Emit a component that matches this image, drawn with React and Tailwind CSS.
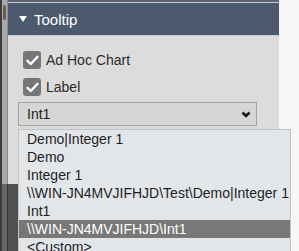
import React from 'react';

const font = { fontFamily: '"Liberation Sans", Arial, sans-serif' };

function Check({ label }) {
  return (
    <div className="flex items-center h-[18px] ml-[15px]">
      <span className="w-[18px] h-[18px] rounded-[3px] bg-[#767676] flex items-center justify-center">
        <svg width="13" height="11" viewBox="0 0 13 11">
          <path d="M1.5 5.8 L4.8 9 L11.5 1.8" fill="none" stroke="#fff" strokeWidth="2.4" strokeLinecap="round" strokeLinejoin="round" />
        </svg>
      </span>
      <span className="ml-[5px] text-[14px] text-[#2b2b2b] leading-none">{label}</span>
    </div>
  );
}

const options = [
  'Demo|Integer 1',
  'Demo',
  'Integer 1',
  '\\\\WIN-JN4MVJIFHJD\\Test\\Demo|Integer 1',
  'Int1',
  '\\\\WIN-JN4MVJIFHJD\\Int1',
  '<Custom>',
];

export default function App() {
  return (
    <div className="relative w-[299px] h-[251px] overflow-hidden bg-[#f6f6f6] flex" style={font}>
      {/* outer scrollbar */}
      <div className="w-[8px] flex flex-col">
        <div className="h-[184px] flex bg-[#a9a9a9]">
          <div className="w-[2px] bg-[#3d3d3d]" />
          <div className="flex-1 pt-[5px] pl-[1px]">
            <div className="w-[3px] h-[15px] rounded-sm bg-[#6d5c4e]" />
          </div>
          <div className="w-[1px] bg-[#8c8c8c]" />
        </div>
        <div className="flex-1 flex bg-[#666]">
          <div className="w-[2px] bg-[#3d3d3d]" />
          <div className="flex-1" />
          <div className="w-[1px] bg-[#333]" />
        </div>
      </div>

      {/* panel */}
      <div className="w-[271px] flex flex-col">
        <div className="h-[2px] bg-[#5b6470]" />
        <div className="h-[1px] bg-[#c9cdd2]" />
        <div className="h-[32px] bg-[#4b5a6c] flex items-center">
          <svg width="8" height="6" viewBox="0 0 8 6" className="ml-[11px]">
            <path d="M0 0 H8 L4 6 Z" fill="#fff" />
          </svg>
          <span className="ml-[7px] text-[15px] text-white leading-none">Tooltip</span>
        </div>
        <div className="h-[1px] bg-[#c6cbd1]" />
        <div className="h-[148px] bg-[#dcdcdc] pt-[15px] flex flex-col">
          <Check label="Ad Hoc Chart" />
          <div className="h-[9px]" />
          <Check label="Label" />
          <div className="ml-[10px] mt-[6px] w-[239px] h-[24px] border border-[#a3a3a3] bg-[#d6d6d6] flex items-center justify-between pl-[8px] pr-[5px]">
            <span className="text-[14px] text-[#222] leading-none">Int1</span>
            <svg width="10" height="7" viewBox="0 0 10 7">
              <path d="M1.5 1.5 L5 5 L8.5 1.5" fill="none" stroke="#111" strokeWidth="2.6" />
            </svg>
          </div>
        </div>
        <div className="flex-1 flex">
          <div className="w-[10px] bg-[#505050]" />
        </div>
      </div>

      {/* open select list */}
      <div className="absolute left-[18px] top-[129px] w-[273px] h-[140px] border border-[#c2c2c2] bg-[#e3e6e9]">
        {options.map((o, i) => (
          <div
            key={i}
            className={`h-[18px] flex items-center pl-[8px] text-[14px] leading-none whitespace-nowrap ${
              i === 5 ? 'bg-[#787878] text-white' : 'text-[#1e1e1e]'
            }`}
          >
            {o}
          </div>
        ))}
      </div>
    </div>
  );
}
